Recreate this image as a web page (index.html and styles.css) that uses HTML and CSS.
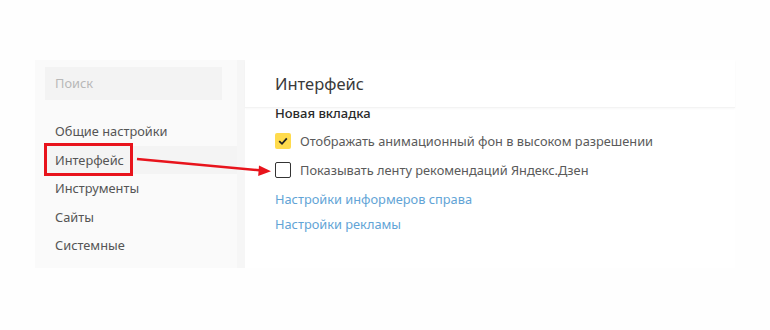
FILE: index.html
```html
<!DOCTYPE html>
<html lang="ru">
<head>
<meta charset="utf-8">
<title>Интерфейс</title>
<link rel="stylesheet" href="styles.css">
</head>
<body>
<div class="shot">
  <aside class="sidebar">
    <div class="search">Поиск</div>
    <nav class="menu">
      <div class="item">Общие настройки</div>
      <div class="item active"><span class="mark">Интерфейс</span></div>
      <div class="item">Инструменты</div>
      <div class="item">Сайты</div>
      <div class="item">Системные</div>
    </nav>
  </aside>
  <div class="divider"></div>
  <main class="main">
    <header class="head">Интерфейс</header>
    <section class="body">
      <div class="section-title">Новая вкладка</div>
      <label class="check"><span class="box on"><svg viewBox="0 0 16 16" width="16" height="16"><path d="M4.2 8.2 L7 10.8 L11.8 5.4" fill="none" stroke="#222" stroke-width="1.8"/></svg></span>Отображать анимационный фон в высоком разрешении</label>
      <label class="check"><span class="box"></span>Показывать ленту рекомендаций Яндекс.Дзен</label>
      <a class="link">Настройки информеров справа</a>
      <a class="link">Настройки рекламы</a>
    </section>
  </main>
</div>
<svg class="arrow" width="770" height="330" viewBox="0 0 770 330">
  <line x1="137" y1="159" x2="262" y2="170.5" stroke="#e8141c" stroke-width="2.5"/>
  <path d="M271 171.3 L259 165.5 L258.2 176 Z" fill="#e8141c"/>
</svg>
</body>
</html>
```
FILE: styles.css
```css
html, body {
  margin: 0;
  padding: 0;
  background: #fefefe;
  font-family: "Noto Sans", "Open Sans", sans-serif;
}
.shot {
  display: flex;
  margin: 60px 0 0 35px;
  width: 700px;
  height: 208px;
}
.sidebar {
  width: 202px;
  background: #fafafa;
  padding: 7px 0 0 10px;
  box-sizing: border-box;
}
.search {
  width: 177px;
  height: 33px;
  background: #f3f3f3;
  color: #b8b8b8;
  font-size: 12.8px;
  line-height: 33px;
  padding-left: 10px;
  box-sizing: border-box;
}
.menu {
  margin-top: 17px;
  display: flex;
  flex-direction: column;
}
.item {
  height: 28.5px;
  line-height: 28.5px;
  font-size: 12.8px;
  color: #555;
  padding-left: 10px;
  position: relative;
}
.item.active {
  background: #f4f4f4;
}
.mark {
  position: relative;
}
.mark::after {
  content: "";
  position: absolute;
  left: -11px;
  right: -9px;
  top: -8px;
  bottom: -7px;
  border: 3px solid #e8141c;
}
.divider {
  width: 8px;
  background: #f6f6f6;
}
.main {
  flex: 1;
  background: #fff;
  display: flex;
  flex-direction: column;
}
.head {
  height: 48px;
  box-sizing: border-box;
  padding: 12px 0 0 30px;
  font-size: 16.5px;
  color: #3a3a3a;
  border-bottom: 1px solid #f3f3f3;
  box-shadow: 0 1px 2px rgba(0,0,0,0.03);
}
.body {
  padding: 0 0 0 30px;
  display: flex;
  flex-direction: column;
}
.section-title {
  font-size: 13px;
  font-weight: 500;
  color: #2a2a2a;
  line-height: 14px;
  height: 14px;
  margin-top: -2px;
}
.check {
  display: flex;
  align-items: center;
  font-size: 12.8px;
  color: #5a5a5a;
  height: 29px;
}
.check:first-of-type {
  margin-top: 6px;
}
.box {
  width: 16px;
  height: 16px;
  box-sizing: border-box;
  border: 1.6px solid #333;
  border-radius: 2px;
  margin-right: 9px;
  display: flex;
}
.box.on {
  background: #ffdb4d;
  border: none;
}
.link {
  font-size: 12.8px;
  color: #62a4d6;
  height: 25px;
  line-height: 25px;
}
.link:first-of-type {
  margin-top: 3px;
}
.arrow {
  position: absolute;
  left: 0;
  top: 0;
  pointer-events: none;
}
```
